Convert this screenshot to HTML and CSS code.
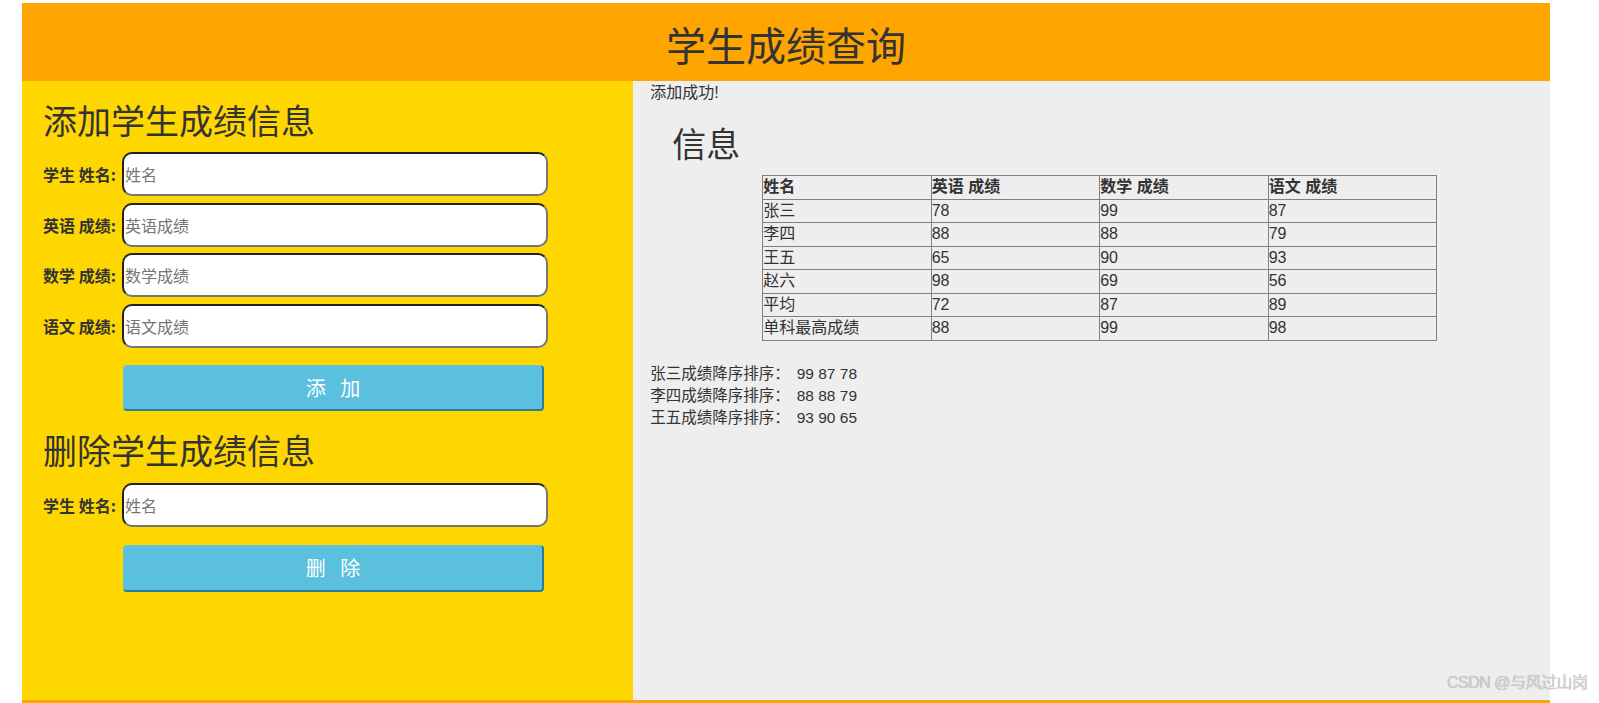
FILE: index.html
```html
<!DOCTYPE html>
<html lang="zh-CN">
<head>
<meta charset="utf-8">
<title>学生成绩查询</title>
<link rel="stylesheet" href="styles.css">
</head>
<body>
<div class="page">
  <header class="header"><h1 class="title">学生成绩查询</h1></header>
  <div class="main">
    <section class="left">
      <h2 class="sec-title">添加学生成绩信息</h2>
      <form class="form">
        <div class="row"><label class="lbl">学生 姓名:</label><input class="field" placeholder="姓名"></div>
        <div class="row"><label class="lbl">英语 成绩:</label><input class="field" placeholder="英语成绩"></div>
        <div class="row"><label class="lbl">数学 成绩:</label><input class="field" placeholder="数学成绩"></div>
        <div class="row"><label class="lbl">语文 成绩:</label><input class="field" placeholder="语文成绩"></div>
        <button class="btn" type="button">添 加</button>
      </form>
      <h2 class="sec-title sec-title-del">删除学生成绩信息</h2>
      <form class="form">
        <div class="row"><label class="lbl">学生 姓名:</label><input class="field" placeholder="姓名"></div>
        <button class="btn btn-del" type="button">删 除</button>
      </form>
    </section>
    <section class="right">
      <p class="msg">添加成功!</p>
      <h2 class="info-title">信息</h2>
      <table class="grid">
        <tr><th>姓名</th><th>英语 成绩</th><th>数学 成绩</th><th>语文 成绩</th></tr>
        <tr><td>张三</td><td>78</td><td>99</td><td>87</td></tr>
        <tr><td>李四</td><td>88</td><td>88</td><td>79</td></tr>
        <tr><td>王五</td><td>65</td><td>90</td><td>93</td></tr>
        <tr><td>赵六</td><td>98</td><td>69</td><td>56</td></tr>
        <tr><td>平均</td><td>72</td><td>87</td><td>89</td></tr>
        <tr><td>单科最高成绩</td><td>88</td><td>99</td><td>98</td></tr>
      </table>
      <div class="sort">
        <p class="sort-line">张三成绩降序排序：<span class="nums">99 87 78</span></p>
        <p class="sort-line">李四成绩降序排序：<span class="nums">88 88 79</span></p>
        <p class="sort-line">王五成绩降序排序：<span class="nums">93 90 65</span></p>
      </div>
    </section>
  </div>
  <footer class="footer"></footer>
</div>
<div class="watermark">CSDN @与风过山岗</div>
</body>
</html>
```

FILE: styles.css
```css
html, body {
  margin: 0;
  padding: 0;
  background: #fff;
}
body {
  font-family: "Liberation Sans", "Noto Sans CJK SC", sans-serif;
  color: #333;
  overflow: hidden;
}
.page {
  width: 1528px;
  margin: 3px 0 0 22px;
}
.header {
  background: #ffa500;
  height: 78px;
  box-sizing: border-box;
  padding-top: 4px;
}
.title {
  margin: 0;
  font-family: "Noto Sans CJK SC", sans-serif;
  font-size: 40px;
  font-weight: normal;
  line-height: 74px;
  text-align: center;
  color: #333;
}
.main {
  display: flex;
  height: 619px;
}
.left {
  width: 40%;
  background: #ffd700;
  box-sizing: border-box;
  padding: 0 21px;
}
.sec-title {
  margin: 14px 0 8px;
  font-family: "Noto Sans CJK SC", sans-serif;
  font-size: 34px;
  font-weight: normal;
  color: #333;
}
.sec-title-del {
  margin-bottom: 9px;
}
.form {
  display: flex;
  flex-direction: column;
  gap: 6.5px;
  margin: 0;
}
.row {
  display: flex;
  align-items: center;
}
.lbl {
  width: 79px;
  font-family: "Noto Sans CJK SC", sans-serif;
  font-size: 16px;
  font-weight: bold;
  color: #333;
  white-space: nowrap;
}
.field {
  width: 426px;
  height: 44px;
  box-sizing: border-box;
  border: 2px solid;
  border-color: #222 #767676 #767676 #222;
  border-radius: 10px;
  padding: 0 0 0 1px;
  background: #fff;
  font-family: "Noto Sans CJK SC", sans-serif;
  font-size: 16px;
  color: #333;
  outline: none;
}
.field::placeholder {
  color: #757575;
}
.btn {
  align-self: flex-start;
  margin: 10.5px 0 0 80px;
  width: 421px;
  height: 46.5px;
  box-sizing: border-box;
  background: #5bc0de;
  border-style: solid;
  border-width: 1px 2px 2px 1px;
  border-color: #62c2df #2b7c95 #2b7c95 #5fbfdc;
  border-radius: 4px;
  color: #fff;
  font-family: "Noto Sans CJK SC", sans-serif;
  font-size: 20px;
  letter-spacing: 5px;
  padding: 0 0 0 5px;
  cursor: pointer;
}
.btn-del {
  margin-top: 11.5px;
}
.right {
  flex: 1;
  background: #eee;
  padding-left: 17px;
}
.msg {
  margin: 0;
  font-size: 16px;
  line-height: 23px;
}
.info-title {
  margin: 14px 0 8px 22px;
  font-family: "Noto Sans CJK SC", sans-serif;
  font-size: 34px;
  font-weight: normal;
  color: #333;
}
.grid {
  margin-left: 112px;
  width: 675px;
  border-collapse: collapse;
  table-layout: fixed;
  font-size: 16px;
}
.grid th,
.grid td {
  border: 1px solid #808080;
  padding: 0;
  line-height: 22.5px;
  text-align: left;
  color: #333;
}
.grid th {
  font-weight: bold;
}
.sort {
  margin-top: 22px;
}
.sort-line {
  margin: 0;
  font-size: 15.5px;
  line-height: 22px;
}
.sort-line .nums {
  margin-left: 7px;
}
.footer {
  background: #ffa500;
  height: 20px;
}
.watermark {
  position: absolute;
  left: 1447px;
  top: 669px;
  font-family: "Liberation Sans", "Noto Sans CJK SC", sans-serif;
  font-size: 16px;
  letter-spacing: -0.5px;
  color: #cfcfcf;
  text-shadow: 0 0 1px rgba(0, 0, 0, 0.3);
  white-space: nowrap;
}
```
